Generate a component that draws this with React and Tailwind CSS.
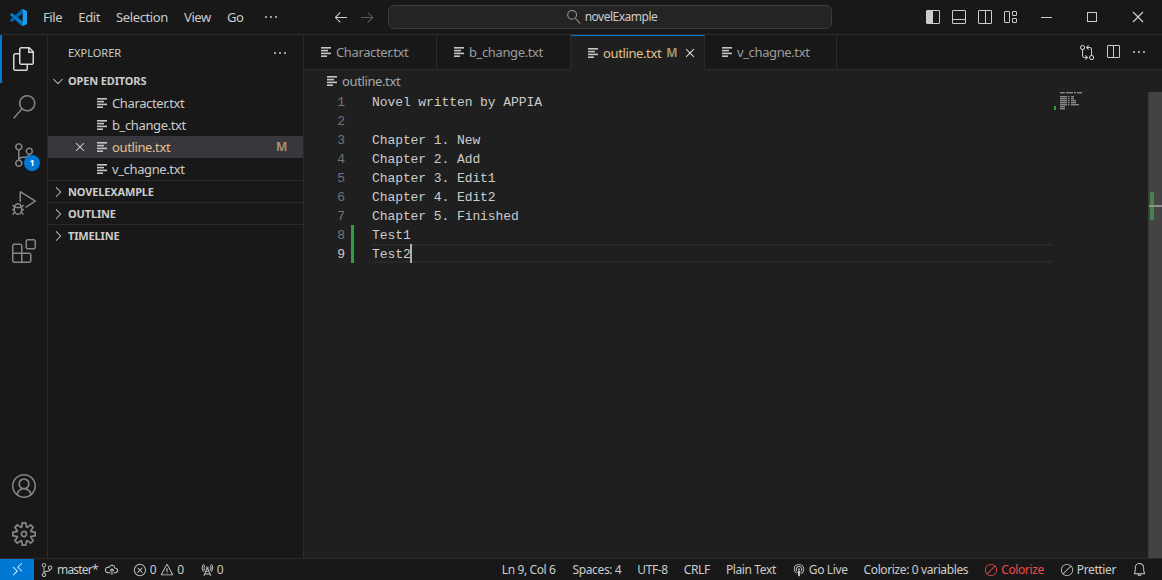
import {
  VscFiles, VscSearch, VscSourceControl, VscDebugAlt, VscExtensions, VscAccount, VscSettingsGear,
  VscEllipsis, VscChevronDown, VscChevronRight, VscClose, VscChromeMinimize, VscChromeMaximize,
  VscChromeClose, VscArrowLeft, VscArrowRight, VscGitCompare, VscSplitHorizontal, VscRemote,
  VscCloudUpload, VscError, VscWarning, VscRadioTower, VscBroadcast, VscBell, VscCircleSlash,
} from "react-icons/vsc";

const UI_FONT = "font-['Noto_Sans',sans-serif] tracking-[-0.38px]";

const CODE_LINES = [
  "Novel written by APPIA",
  "",
  "Chapter 1. New",
  "Chapter 2. Add",
  "Chapter 3. Edit1",
  "Chapter 4. Edit2",
  "Chapter 5. Finished",
  "Test1",
  "Test2",
];

// Seti text file icon
const TextIcon = ({ className = "" }) => (
  <svg width="11" height="10" viewBox="0 0 11 10" className={`shrink-0 ${className}`}>
    <rect x="0" y="0" width="10" height="1.6" fill="#c5c5c5" />
    <rect x="0" y="2.8" width="7" height="1.6" fill="#c5c5c5" />
    <rect x="0" y="5.6" width="10" height="1.6" fill="#c5c5c5" />
    <rect x="0" y="8.4" width="6" height="1.6" fill="#c5c5c5" />
  </svg>
);

const Logo = () => (
  <svg width="17" height="17" viewBox="0 0 100 100">
    <path fill="#0065a9" d="M96.4614 10.7962L75.8569 0.875542C73.4719 -0.272773 70.6217 0.211611 68.75 2.08333L1.29858 63.5832C-0.515693 65.2373 -0.513607 68.0937 1.30308 69.7452L6.81272 74.754C8.29793 76.1042 10.5347 76.2036 12.1338 74.9905L93.3609 13.3699C96.086 11.3026 100 13.2462 100 16.6667V16.4275C100 14.0265 98.6246 11.8378 96.4614 10.7962Z" />
    <path fill="#007acc" d="M96.4614 89.2038L75.8569 99.1245C73.4719 100.273 70.6217 99.7884 68.75 97.9167L1.29858 36.4168C-0.515693 34.7627 -0.513607 31.9063 1.30308 30.2548L6.81272 25.246C8.29793 23.8958 10.5347 23.7964 12.1338 25.0095L93.3609 86.6301C96.086 88.6974 100 86.7538 100 83.3333V83.5725C100 85.9735 98.6246 88.1622 96.4614 89.2038Z" />
    <path fill="#1f9cf0" d="M75.8578 99.1263C73.4721 100.274 70.6219 99.7885 68.75 97.9166C71.0564 100.223 75 98.5895 75 95.3278V4.67213C75 1.41039 71.0564 -0.223106 68.75 2.08329C70.6219 0.211402 73.4721 -0.273666 75.8578 0.873633L96.4587 10.7807C98.6234 11.8217 100 14.0112 100 16.4132V83.5871C100 85.9891 98.6234 88.1786 96.4586 89.2196L75.8578 99.1263Z" />
  </svg>
);

const LayoutIcon = ({ kind }) => (
  <svg width="16" height="16" viewBox="0 0 16 16" fill="none" stroke="#cccccc" strokeWidth="1">
    {kind === "custom" ? (
      <>
        <rect x="1.5" y="2.5" width="5" height="11" rx="0.5" />
        <rect x="9.5" y="2.5" width="4" height="4" rx="0.5" />
        <rect x="9.5" y="9.5" width="4" height="4" rx="0.5" />
      </>
    ) : (
      <>
        <rect x="1.5" y="1.5" width="13" height="13" rx="0.5" />
        {kind === "left" && <rect x="2" y="2" width="5" height="12" fill="#cccccc" stroke="none" />}
        {kind === "left" && <line x1="7.5" y1="2" x2="7.5" y2="14" />}
        {kind === "panel" && <line x1="2" y1="10.5" x2="14" y2="10.5" />}
        {kind === "right" && <line x1="8.5" y1="2" x2="8.5" y2="14" />}
      </>
    )}
  </svg>
);

const TitleBar = () => (
  <div className="flex h-[35px] shrink-0 items-center border-b border-[#2b2b2b] bg-[#181818] text-[13px] text-[#cccccc]">
    <div className="flex w-[35px] shrink-0 justify-center pl-[1px]">
      <Logo />
    </div>
    {["File", "Edit", "Selection", "View", "Go"].map((m) => (
      <span key={m} className="px-2 pt-[1px]">{m}</span>
    ))}
    <VscEllipsis size={16} className="ml-[12px]" />
    <div className="ml-[54px] flex items-center gap-[10px]">
      <VscArrowLeft size={16} />
      <VscArrowRight size={16} className="text-[#5a5a5a]" />
    </div>
    <div className="ml-[13px] flex h-[24px] w-[444px] items-center justify-center gap-[4px] rounded-[6px] border border-[#3c3c3c] bg-[#242424] pl-[3px] text-[12px] tracking-[-0.5px] text-[#cccccc]">
      <VscSearch size={14} className="-scale-x-100 text-[#9d9d9d]" />
      <span>novelExample</span>
    </div>
    <div className="ml-[93px] flex items-center gap-[10px]">
      <LayoutIcon kind="left" />
      <LayoutIcon kind="panel" />
      <LayoutIcon kind="right" />
      <LayoutIcon kind="custom" />
    </div>
    <div className="ml-auto flex pr-[1px]">
      <div className="flex w-[46px] justify-center"><VscChromeMinimize size={16} /></div>
      <div className="flex w-[46px] justify-center"><VscChromeMaximize size={16} /></div>
      <div className="flex w-[46px] justify-center"><VscChromeClose size={16} /></div>
    </div>
  </div>
);

const ActivityItem = ({ icon: Icon, active, children }) => (
  <div className={`relative flex h-[48px] items-center justify-center ${active ? "border-l-2 border-[#0078d4] pr-[2px] text-[#d7d7d7]" : "text-[#858585]"}`}>
    <Icon size={24} />
    {children}
  </div>
);

const ActivityBar = () => (
  <div className="flex w-[48px] shrink-0 flex-col border-r border-[#2b2b2b] bg-[#181818]">
    <ActivityItem icon={VscFiles} active />
    <ActivityItem icon={VscSearch} />
    <ActivityItem icon={VscSourceControl}>
      <span className="absolute left-[24px] top-[24px] flex h-[16px] w-[16px] items-center justify-center rounded-full bg-[#0078d4] text-[9px] font-bold text-white">1</span>
    </ActivityItem>
    <ActivityItem icon={VscDebugAlt} />
    <ActivityItem icon={VscExtensions} />
    <div className="mt-auto" />
    <ActivityItem icon={VscAccount} />
    <ActivityItem icon={VscSettingsGear} />
  </div>
);

const FileRow = ({ name, selected }) => (
  <div className={`flex h-[22px] items-center text-[13px] ${selected ? "bg-[#37373d] text-[#e2c08d]" : "text-[#cccccc]"}`}>
    <div className="flex w-[49px] shrink-0 justify-end pr-[9px]">
      {selected && <VscClose size={16} className="text-[#cccccc]" />}
    </div>
    <TextIcon />
    <span className="ml-[4px] pt-[1px]">{name}</span>
    {selected && <span className="ml-auto pr-[16px] text-[12px] font-bold text-[#a8916a]">M</span>}
  </div>
);

const SectionHeader = ({ title, open, border }) => (
  <div className={`flex h-[22px] items-center text-[11px] font-bold tracking-[-0.15px] text-[#cccccc] ${border ? "border-t border-[#2b2b2b]" : ""}`}>
    {open ? <VscChevronDown size={16} className="ml-[2px]" /> : <VscChevronRight size={16} className="ml-[2px]" />}
    <span className="ml-[2px] pt-[1px]">{title}</span>
  </div>
);

const SideBar = () => (
  <div className="flex w-[256px] shrink-0 flex-col border-r border-[#2b2b2b] bg-[#181818]">
    <div className="flex h-[35px] shrink-0 items-center justify-between pl-[20px] pr-[15px] text-[11px] tracking-normal text-[#cccccc]">
      <span className="pt-[1px]">EXPLORER</span>
      <VscEllipsis size={16} />
    </div>
    <SectionHeader title="OPEN EDITORS" open />
    <FileRow name="Character.txt" />
    <FileRow name="b_change.txt" />
    <FileRow name="outline.txt" selected />
    <FileRow name="v_chagne.txt" />
    <SectionHeader title="NOVELEXAMPLE" border />
    <SectionHeader title="OUTLINE" border />
    <SectionHeader title="TIMELINE" border />
  </div>
);

const Tab = ({ name, active, width }) => (
  <div
    className={`flex h-[35px] shrink-0 items-center border-r border-[#2b2b2b] text-[13px] ${width} ${
      active
        ? "border-t border-t-[#0078d4] bg-[#1f1f1f] pl-[17px] text-[#e2c08d]"
        : "border-b border-b-[#2b2b2b] bg-[#181818] pl-[17px] text-[#9d9d9d]"
    }`}
  >
    <TextIcon />
    <span className="ml-[4px] pt-[1px]">{name}</span>
    {active && <span className="ml-[5px] text-[12px] font-bold text-[#a8916a]">M</span>}
    {active && <VscClose size={16} className="ml-[5px] text-[#e8e8e8]" />}
  </div>
);

const TabBar = () => (
  <div className="flex h-[35px] shrink-0 bg-[#181818]">
    <Tab name="Character.txt" width="w-[133px]" />
    <Tab name="b_change.txt" width="w-[134px]" />
    <Tab name="outline.txt" width="w-[134px]" active />
    <Tab name="v_chagne.txt" width="w-[132px]" />
    <div className="flex flex-1 items-center justify-end gap-[10px] border-b border-[#2b2b2b] pr-[15px] text-[#cccccc]">
      <VscGitCompare size={16} />
      <VscSplitHorizontal size={16} />
      <VscEllipsis size={16} />
    </div>
  </div>
);

// tiny rendering of the file in the minimap
const Minimap = () => (
  <svg width="96" height="24" viewBox="0 0 96 24" className="shrink-0">
    <rect x="2" y="14" width="2" height="4" fill="#2ea043" />
    <g fill="#8a8a8a">
      <rect x="8" y="0" width="5" height="1.4" />
      <rect x="14" y="0" width="7" height="1.4" />
      <rect x="22" y="0" width="2" height="1.4" />
      <rect x="25" y="0" width="5" height="1.4" />
      {[4, 6, 8, 10, 12].map((y) => (
        <rect key={y} x="8" y={y} width="7" height="1.4" />
      ))}
      {[4, 6, 8, 10, 12].map((y) => (
        <rect key={y} x="16" y={y} width="1.5" height="1.4" />
      ))}
      <rect x="19" y="4" width="3" height="1.4" />
      <rect x="19" y="6" width="3" height="1.4" />
      <rect x="19" y="8" width="5" height="1.4" />
      <rect x="19" y="10" width="5" height="1.4" />
      <rect x="19" y="12" width="8" height="1.4" />
      <rect x="8" y="14" width="5" height="1.4" />
      <rect x="8" y="16" width="5" height="1.4" />
    </g>
  </svg>
);

const Editor = () => (
  <div className="flex min-w-0 flex-1 flex-col bg-[#1f1f1f]">
    <TabBar />
    <div className="flex h-[22px] shrink-0 items-center pl-[23px] text-[13px] text-[#a9a9a9]">
      <TextIcon />
      <span className="ml-[4px] pt-[1px]">outline.txt</span>
    </div>
    <div className="relative flex min-h-0 flex-1 font-['Liberation_Mono',monospace] text-[13px] leading-[19px] tracking-[-0.08px]">
      <div className="w-[748px] shrink-0">
        {CODE_LINES.map((line, i) => {
          const n = i + 1;
          const current = n === 9;
          return (
            <div key={n} className="flex h-[19px]">
              <span className={`w-[41px] shrink-0 pt-[1px] text-right ${current ? "text-[#cccccc]" : "text-[#6e7681]"}`}>{n}</span>
              <span className={`ml-[6px] w-[3px] shrink-0 ${n >= 8 ? "bg-[#2ea043]" : ""}`} />
              <span className={`ml-[18px] flex-1 whitespace-pre text-[#cccccc] ${current ? "border-y-2 border-[#282828] leading-[17px]" : "pt-[1px]"}`}>
                {line}
                {current && <span className="-mt-[2px] -ml-[1px] inline-block h-[19px] w-[2px] bg-[#aeafad] align-top" />}
              </span>
            </div>
          );
        })}
      </div>
      <div className="flex-1"><Minimap /></div>
      <div className="relative w-[14px] shrink-0 border-l border-[#3a3a3a] bg-[#434343]">
        <div className="absolute left-[1px] top-[100px] h-[28px] w-[4px] bg-[#487e50]" />
        <div className="absolute left-0 right-0 top-[113px] h-[2px] bg-[#8f8f8f]" />
      </div>
    </div>
  </div>
);

const StatusText = ({ className = "", children }) => (
  <span className={`flex items-center ${className}`}>{children}</span>
);

const StatusBar = () => (
  <div className="flex h-[22px] shrink-0 items-center border-t border-[#2b2b2b] bg-[#181818] text-[12px] text-[#cccccc]">
    <div className="flex h-full w-[34px] items-center justify-center bg-[#0078d4] text-white">
      <VscRemote size={15} />
    </div>
    <StatusText className="ml-[6px] gap-[3px] tracking-[-0.8px]"><VscSourceControl size={14} />master*</StatusText>
    <VscCloudUpload size={15} className="ml-[6px]" />
    <StatusText className="ml-[14px] gap-[3px]"><VscError size={14} />0<VscWarning size={14} className="ml-[1px]" />0</StatusText>
    <StatusText className="ml-[16px] gap-[3px]"><VscRadioTower size={14} />0</StatusText>
    <div className="ml-auto flex items-center gap-[16px] pr-[15px]">
      <span className="mr-[1px]">Ln 9, Col 6</span>
      <span>Spaces: 4</span>
      <span>UTF-8</span>
      <span>CRLF</span>
      <span>Plain Text</span>
      <StatusText className="gap-[3px]"><VscBroadcast size={14} />Go Live</StatusText>
      <span>Colorize: 0 variables</span>
      <StatusText className="gap-[3px] text-[#f14c4c]"><VscCircleSlash size={14} />Colorize</StatusText>
      <StatusText className="gap-[3px]"><VscCircleSlash size={14} />Prettier</StatusText>
      <VscBell size={15} />
    </div>
  </div>
);

export default function App() {
  return (
    <div className={`flex h-[580px] w-[1162px] flex-col overflow-hidden bg-[#181818] ${UI_FONT}`}>
      <TitleBar />
      <div className="flex min-h-0 flex-1">
        <ActivityBar />
        <SideBar />
        <Editor />
      </div>
      <StatusBar />
    </div>
  );
}
